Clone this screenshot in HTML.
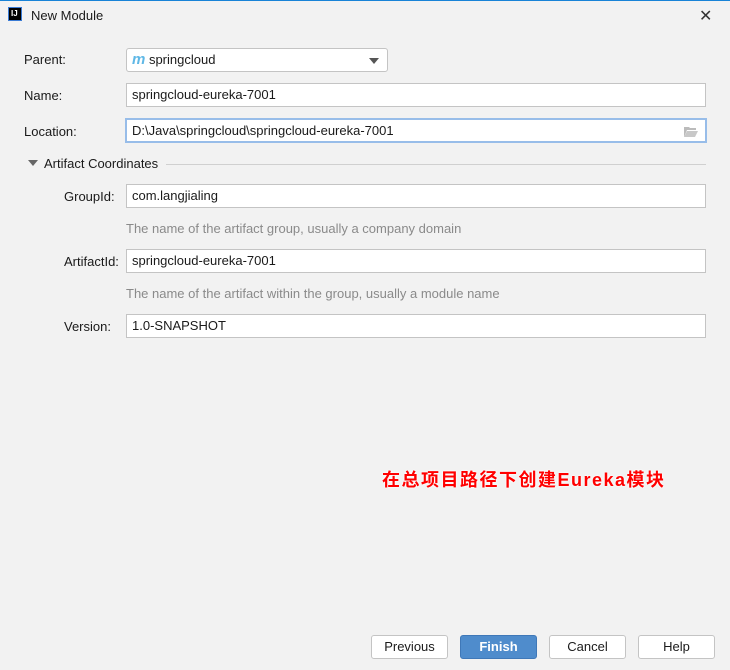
<!DOCTYPE html>
<html><head><meta charset="utf-8"><style>
body{margin:0;width:730px;height:670px;background:#f2f2f2;font-family:"Liberation Sans","Noto Sans CJK SC",sans-serif;font-size:13px;color:#1a1a1a;position:relative;overflow:hidden}
.a{position:absolute}
.f{position:absolute;background:#fff;border:1px solid #c4c4c4;box-sizing:border-box;padding-left:5px;line-height:21px;font-size:13px}
.l{position:absolute;font-size:13px}
.h{position:absolute;color:#8a8a8a;font-size:13px}
.b{position:absolute;top:635px;width:77px;height:24px;box-sizing:border-box;border:1px solid #c4c4c4;border-radius:3px;background:#fff;text-align:center;line-height:22px;font-size:13px}
</style></head><body>
<div class="a" style="left:0;top:0;width:730px;height:1px;background:#1883d7"></div>
<div class="a" style="left:8px;top:7px;width:14px;height:14px;background:#000;border:1px solid #3a7bd5;color:#fff;font-size:8px;font-weight:bold;line-height:11px;padding-left:2px;box-sizing:border-box">IJ</div>
<div class="a" style="left:31px;top:8px;font-size:13px">New Module</div>
<div class="a" style="left:699px;top:6px;font-size:16px;color:#333">✕</div>

<div class="l" style="left:24px;top:52px">Parent:</div>
<div class="f" style="left:126px;top:48px;width:262px;height:24px;border-radius:3px;line-height:22px"><span style="color:#5fb8e6;font-weight:bold;font-style:italic;font-size:15px">m</span> springcloud<span class="a" style="right:8px;top:9px;width:0;height:0;border-left:5px solid transparent;border-right:5px solid transparent;border-top:6px solid #555"></span></div>

<div class="l" style="left:24px;top:88px">Name:</div>
<div class="f" style="left:126px;top:83px;width:580px;height:24px">springcloud-eureka-7001</div>

<div class="l" style="left:24px;top:124px">Location:</div>
<div class="f" style="left:125px;top:118px;width:582px;height:25px;border:2px solid #98bde9;padding-left:5px;line-height:21px">D:\Java\springcloud\springcloud-eureka-7001
<svg class="a" style="right:6px;top:5px" width="16" height="13" viewBox="0 0 16 13"><path d="M1 2h5l1 1h6v2H4L1 12z" fill="#bbb"/><path d="M4 6h11l-3 6H1z" fill="#c8c8c8"/></svg></div>

<div class="a" style="left:28px;top:160px;width:0;height:0;border-left:5px solid transparent;border-right:5px solid transparent;border-top:6px solid #666"></div>
<div class="l" style="left:44px;top:156px">Artifact Coordinates</div>
<div class="a" style="left:166px;top:164px;width:540px;height:1px;background:#d0d0d0"></div>

<div class="l" style="left:64px;top:189px">GroupId:</div>
<div class="f" style="left:126px;top:184px;width:580px;height:24px">com.langjialing</div>
<div class="h" style="left:126px;top:221px">The name of the artifact group, usually a company domain</div>

<div class="l" style="left:64px;top:254px">ArtifactId:</div>
<div class="f" style="left:126px;top:249px;width:580px;height:24px">springcloud-eureka-7001</div>
<div class="h" style="left:126px;top:286px">The name of the artifact within the group, usually a module name</div>

<div class="l" style="left:64px;top:319px">Version:</div>
<div class="f" style="left:126px;top:314px;width:580px;height:24px">1.0-SNAPSHOT</div>

<div class="a" style="left:382px;top:466px;color:#f00;font-weight:bold;font-size:18px;letter-spacing:1.5px;text-shadow:0 0 2px #fff,0 0 2px #fff">在总项目路径下创建Eureka模块</div>

<div class="b" style="left:371px">Previous</div>
<div class="b" style="left:460px;background:#4f8ccc;border-color:#3f78b8;color:#fff;font-weight:bold">Finish</div>
<div class="b" style="left:549px">Cancel</div>
<div class="b" style="left:638px">Help</div>
</body></html>
